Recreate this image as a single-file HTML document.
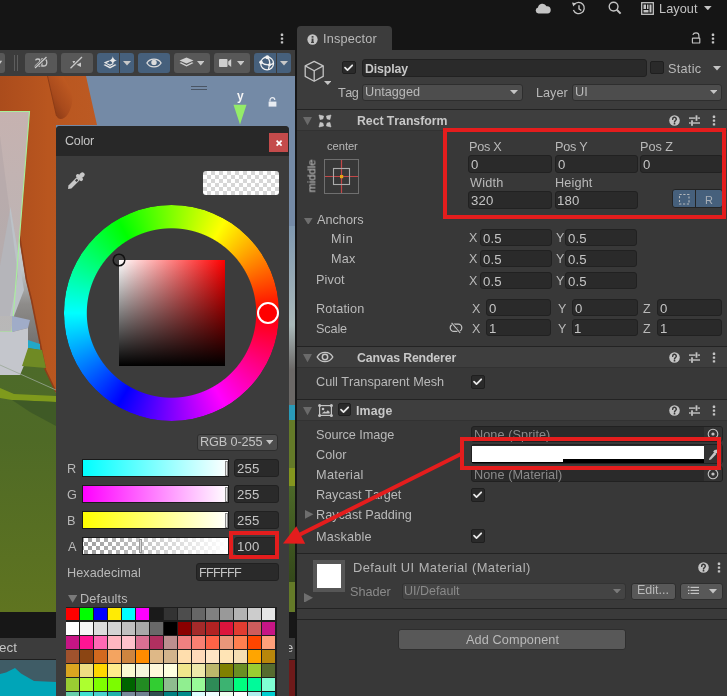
<!DOCTYPE html><html><head><meta charset="utf-8"><style>
html,body{margin:0;padding:0;width:727px;height:696px;overflow:hidden;background:#161616;}
body{position:relative;font-family:"Liberation Sans",sans-serif;-webkit-font-smoothing:antialiased;}
.r{position:absolute;}
.t{position:absolute;line-height:1;white-space:nowrap;will-change:transform;font-kerning:none;}
</style></head><body>
<div class="r" style="left:0px;top:0px;width:727px;height:50px;background:#151515;"></div>
<div class="r" style="left:0px;top:50px;width:295px;height:26px;background:#3c3c3c;"></div>
<div class="r" style="left:297px;top:50px;width:430px;height:646px;background:#383838;"></div>
<div class="r" style="left:297px;top:26px;width:95px;height:24px;background:#3c3c3c;border-radius:4px 4px 0 0;"></div>
<div class="r" style="left:0px;top:76px;width:295px;height:536px;background:#748aa6;"></div>
<div class="r" style="left:0px;top:612px;width:295px;height:26px;background:#171717;"></div>
<div class="r" style="left:0px;top:638px;width:295px;height:21px;background:#3c3c3c;"></div>
<div class="r" style="left:0px;top:659px;width:295px;height:1px;background:#232323;"></div>
<div class="r" style="left:0px;top:660px;width:295px;height:36px;background:#3f5c66;"></div>
<svg class="r" style="left:0px;top:76px;" width="295" height="536" viewBox="0 0 295 536">
<defs>
<linearGradient id="org" gradientUnits="userSpaceOnUse" x1="0" y1="0" x2="97" y2="0"><stop offset="0" stop-color="#ab4c1c"/><stop offset="0.5" stop-color="#b9561f"/><stop offset="1" stop-color="#bc5a23"/></linearGradient>
<linearGradient id="blg" x1="0.1" y1="1" x2="0.9" y2="0.1"><stop offset="0" stop-color="#7e3414"/><stop offset="0.45" stop-color="#a84a1c"/><stop offset="1" stop-color="#c25c22"/></linearGradient>
<linearGradient id="fog" x1="0" y1="0" x2="0" y2="1"><stop offset="0" stop-color="#7f98b0"/><stop offset="0.55" stop-color="#a9b8b9"/><stop offset="0.8" stop-color="#6b6866"/><stop offset="1" stop-color="#6b6866"/></linearGradient><linearGradient id="dg" x1="0" y1="0" x2="0" y2="1"><stop offset="0" stop-color="#4c6828"/><stop offset="1" stop-color="#34481a"/></linearGradient>
<linearGradient id="sky2" gradientUnits="userSpaceOnUse" x1="0" y1="120" x2="0" y2="270"><stop offset="0" stop-color="#c9cfd2"/><stop offset="0.5" stop-color="#c0c6c8"/><stop offset="0.72" stop-color="#8e8c8a"/><stop offset="1" stop-color="#72706e"/></linearGradient>
<linearGradient id="grn" x1="0" y1="0" x2="0" y2="1"><stop offset="0" stop-color="#4c6a2a"/><stop offset="0.35" stop-color="#4f6a26"/><stop offset="1" stop-color="#5f7420"/></linearGradient>
<linearGradient id="pnk" x1="0" y1="0" x2="0" y2="1"><stop offset="0" stop-color="#c6b2b0"/><stop offset="0.6" stop-color="#bdb4b4"/><stop offset="1" stop-color="#b8b8b8"/></linearGradient>
</defs>
<rect x="0" y="0" width="295" height="536" fill="#748aa6"/>
<rect x="285" y="150" width="10" height="180" fill="url(#fog)"/>
<rect x="285" y="329" width="10" height="15" fill="#2a9ab8"/>
<rect x="285" y="344" width="10" height="192" fill="#647a28"/>
<rect x="285" y="392" width="10" height="18" fill="#84961e"/>
<rect x="285" y="410" width="10" height="96" fill="url(#dg)"/>
<polygon points="0,114 19,160 26,204 31,224 45,294 56,317 56,536 0,536" fill="url(#sky2)"/>
<polygon points="0,299 20,299 28,272 42,274 56,317 56,536 0,536" fill="url(#grn)"/>
<polygon points="0,0 86,0 97,49 56,49 56,317 45,294 31,224 26,204 19,160 29.5,35 0,35" fill="url(#org)"/>
<polyline points="19.5,160 26.5,204 31.5,224 45.5,294 56,316" fill="none" stroke="#8a3a18" stroke-width="1.6" opacity="0.85"/>
<path d="M47.5,0 L56.5,40 C58.5,44.5 64,44 68,38 C72,31 73,25 72,19 C70,11 66,5 63,0 Z" fill="url(#blg)"/><line x1="47.5" y1="0" x2="56.5" y2="40" stroke="#8e3c16" stroke-width="1"/>
<polygon points="0,35 29.5,35 12,256 0,256" fill="url(#pnk)"/>
<polygon points="10.5,131 24,214 14,240 0,240 0,190" fill="#bcc2c8"/><polygon points="0,60 18,200 10,240 0,240" fill="#a89ea0" opacity="0.35"/>
<polyline points="0,35.5 29.5,35.5 12,256 0,256" fill="none" stroke="#a8f09a" stroke-width="1.1"/>
<polygon points="12,240 30,244 28,252 12,256" fill="#a0acc8"/>
<polygon points="0,256 12,256 28,252 28,280 20,299 0,299" fill="#c4c6cc"/>
<polygon points="28,264 40,268 40,274 28,272" fill="#22a8c8"/>
<polygon points="28,272 42,274 46,292 22,290" fill="#6f8a24"/>
<line x1="0" y1="289" x2="56" y2="314" stroke="#9aa898" stroke-width="0.8"/>
<polygon points="0,312 14,318 56,320 56,326 12,324 0,322" fill="#7f9a1c"/>
<polygon points="12,324 56,326 56,350 30,336" fill="#3f5a26"/>
</svg>
<div class="r" style="left:190.5px;top:86px;width:16.5px;height:1.0999999999999943px;background:#4a5564;"></div>
<div class="r" style="left:190.5px;top:89.4px;width:16.5px;height:1.0999999999999943px;background:#4a5564;"></div>
<div class="t" style="left:237.21px;top:90.00px;font-size:12px;color:#f4f4f4;font-weight:bold;">y</div>
<svg class="r" style="left:233px;top:103.5px;" width="14" height="21" viewBox="0 0 14 21"><polygon points="0.5,0.8 13.5,0.8 7,20.5" fill="#94ec68"/></svg>
<svg class="r" style="left:268px;top:97px;" width="9" height="10" viewBox="0 0 9 10"><path d="M2,4.5 V3 A2.4,2.4 0 0 1 6.8,3" fill="none" stroke="#e8ecf2" stroke-width="1.2"/><rect x="0.6" y="4.6" width="7.8" height="5" fill="#e8ecf2"/></svg>
<div class="r" style="left:0px;top:612px;width:295px;height:26px;background:#171717;"></div>
<div class="r" style="left:0px;top:638px;width:295px;height:21px;background:#3c3c3c;"></div>
<div class="t" style="left:-1.50px;top:640.80px;font-size:13.4px;color:#c4c4c4;">ect</div>
<div class="r" style="left:289px;top:638px;width:6px;height:21px;overflow:hidden;"><div class="t" style="left:-3px;top:3px;font-size:13px;color:#c4c4c4">e</div></div>
<div class="r" style="left:0px;top:659px;width:295px;height:1px;background:#1f1f1f;"></div>
<svg class="r" style="left:0px;top:660px;" width="56" height="36" viewBox="0 0 56 36"><rect width="56" height="36" fill="#3f5c66"/><polygon points="0,14 6,12.5 15,8 21,13.5 34,21 56,22 56,36 0,36" fill="#00a5b8"/></svg>
<div class="r" style="left:289px;top:660px;width:6px;height:36px;background:#6e1a1a;"></div>
<div class="r" style="left:-4px;top:53px;width:9px;height:20px;background:#585858;border-radius:3px;"></div>
<svg class="r" style="left:0px;top:60px;" width="3" height="5" viewBox="0 0 3 5"><polygon points="-3,0.8 2.2,0.8 -0.4,4.5" fill="#c8c8c8"/></svg>
<div class="r" style="left:14px;top:55px;width:1px;height:16px;background:#5e5e5e;"></div>
<div class="r" style="left:17px;top:55px;width:1px;height:16px;background:#5e5e5e;"></div>
<div class="r" style="left:25px;top:53px;width:32px;height:20px;background:#585858;border-radius:3px;"></div>
<div class="r" style="left:61px;top:53px;width:32px;height:20px;background:#585858;border-radius:3px;"></div>
<div class="r" style="left:97px;top:53px;width:37px;height:20px;background:#46607c;border-radius:3px;"></div>
<div class="r" style="left:119px;top:53px;width:1px;height:20px;background:#3c3c3c;"></div>
<div class="r" style="left:138px;top:53px;width:32px;height:20px;background:#46607c;border-radius:3px;"></div>
<div class="r" style="left:174px;top:53px;width:36px;height:20px;background:#585858;border-radius:3px;"></div>
<div class="r" style="left:214px;top:53px;width:36px;height:20px;background:#585858;border-radius:3px;"></div>
<div class="r" style="left:254px;top:53px;width:37px;height:20px;background:#46607c;border-radius:3px;"></div>
<div class="r" style="left:276px;top:53px;width:1px;height:20px;background:#3c3c3c;"></div>
<svg class="r" style="left:34px;top:55px;" width="16" height="16" viewBox="0 0 16 16"><g fill="none" stroke="#c8c8c8" stroke-width="1.3"><path d="M1.6,5.4 C1.9,3.6 5.9,3.4 5.9,5.7 C5.9,7.4 3.2,8.8 1.4,11 H6.3"/><path d="M7.9,3.9 V11 H9.5 C13.9,11 13.9,3.9 9.5,3.9 Z"/></g><line x1="1" y1="13" x2="12.5" y2="2" stroke="#585858" stroke-width="2.6"/><line x1="1" y1="13" x2="12.5" y2="2" stroke="#c8c8c8" stroke-width="1.3"/></svg>
<svg class="r" style="left:69px;top:55px;" width="16" height="16" viewBox="0 0 16 16"><g fill="#c8c8c8"><polygon points="7.5,9.8 12,7.5 12,12 "/><polygon points="3.5,6 6,6 6,8.5 4.5,8.5"/></g><line x1="1.5" y1="13.3" x2="13" y2="2" stroke="#585858" stroke-width="2.6"/><line x1="1.5" y1="13.3" x2="13" y2="2" stroke="#c8c8c8" stroke-width="1.3"/></svg>
<svg class="r" style="left:103px;top:56px;" width="15" height="13" viewBox="0 0 15 13"><g fill="#e6e6e6"><path d="M9.8,0.3 Q10.3,3.9 13.8,4.5 Q10.3,5.1 9.8,8.7 Q9.3,5.1 5.8,4.5 Q9.3,3.9 9.8,0.3 Z"/><polygon points="0.5,9 2,8.3 7,10.8 12,8.3 13.5,9 7,12.6"/><polygon points="0.8,6.6 5.4,4.6 6.6,5.4 3.4,6.9 7,8.6 9.8,7.2 10.9,7.8 7,9.9"/></g></svg>
<svg class="r" style="left:123px;top:61px;" width="8" height="4.5" viewBox="0 0 8 4.5"><polygon points="0,0 8,0 4.0,4.5" fill="#c8c8c8"/></svg>
<svg class="r" style="left:146px;top:58px;" width="16" height="10" viewBox="0 0 16 10"><path d="M0.9,5 C4,-0.2 12,-0.2 15.1,5 C12,10.2 4,10.2 0.9,5 Z" fill="none" stroke="#dcdcdc" stroke-width="1.3"/><circle cx="8" cy="4.4" r="2.7" fill="#dcdcdc"/></svg>
<svg class="r" style="left:179px;top:57px;" width="15" height="12" viewBox="0 0 15 12"><g fill="#d0d0d0"><polygon points="7.5,0.5 14.5,3.5 7.5,6.5 0.5,3.5"/><polygon points="0.5,6 2,5.3 7.5,8 13,5.3 14.5,6 7.5,9.5"/></g></svg>
<svg class="r" style="left:196.5px;top:61px;" width="7.5" height="4.5" viewBox="0 0 7.5 4.5"><polygon points="0,0 7.5,0 3.75,4.5" fill="#c8c8c8"/></svg>
<svg class="r" style="left:218px;top:58px;" width="14" height="10" viewBox="0 0 14 10"><g fill="#cfcfcf"><rect x="1" y="1" width="8.5" height="8" rx="0.8"/><polygon points="10.2,3.6 13.2,1 13.2,9 10.2,6.4"/></g></svg>
<svg class="r" style="left:236.5px;top:61px;" width="7.5" height="4.5" viewBox="0 0 7.5 4.5"><polygon points="0,0 7.5,0 3.75,4.5" fill="#c8c8c8"/></svg>
<svg class="r" style="left:259px;top:55px;" width="16" height="17" viewBox="0 0 16 17"><g fill="none" stroke="#f0f0f0" stroke-width="1.3"><circle cx="8.1" cy="8.4" r="6.4"/><path d="M8.3,2.2 C10.5,4.5 11,7.5 10.5,9.8 C10,12 9.5,13.5 9.5,14.9"/><path d="M2,7.3 C4.5,9.5 7.5,10 10.5,9.8 C12.5,9.5 14,8.8 14.6,8"/></g><g fill="#f0f0f0"><circle cx="8.3" cy="2.2" r="2"/><circle cx="2" cy="7.3" r="1.8"/><circle cx="10.5" cy="9.8" r="1.5"/></g></svg>
<svg class="r" style="left:280px;top:61px;" width="8" height="4.5" viewBox="0 0 8 4.5"><polygon points="0,0 8,0 4.0,4.5" fill="#c8c8c8"/></svg>
<svg class="r" style="left:280px;top:33px;" width="4" height="11" viewBox="0 0 4 11"><g fill="#c4c4c4"><rect x="0.8" y="0.6" width="2.4" height="2.4" rx="0.6"/><rect x="0.8" y="4.4" width="2.4" height="2.4" rx="0.6"/><rect x="0.8" y="8.2" width="2.4" height="2.4" rx="0.6"/></g></svg>
<svg class="r" style="left:535px;top:2px;" width="16" height="12" viewBox="0 0 16 12"><path d="M3.5,11.5 A3,3 0 0 1 3,5.6 A4.5,4.5 0 0 1 11.5,4.2 A3.6,3.6 0 0 1 12.5,11.5 Z" fill="#c4c4c4"/></svg>
<svg class="r" style="left:571px;top:1px;" width="15" height="14" viewBox="0 0 15 14"><path d="M3.2,3.6 A5.6,5.6 0 1 1 2.4,9" fill="none" stroke="#c4c4c4" stroke-width="1.3"/><polygon points="1,1.5 5.2,2.3 2.3,5.5" fill="#c4c4c4"/><path d="M8,4.3 V7.8 L10.3,9.5" fill="none" stroke="#c4c4c4" stroke-width="1.4"/></svg>
<svg class="r" style="left:608px;top:1px;" width="14" height="14" viewBox="0 0 14 14"><circle cx="5.6" cy="5.6" r="4.4" fill="none" stroke="#c4c4c4" stroke-width="1.4"/><line x1="8.8" y1="8.8" x2="12.6" y2="12.6" stroke="#c4c4c4" stroke-width="2"/></svg>
<svg class="r" style="left:640.5px;top:1.5px;" width="13" height="13" viewBox="0 0 13 13"><rect x="0.7" y="0.7" width="11.6" height="11.6" fill="none" stroke="#c4c4c4" stroke-width="1.3"/><rect x="2.5" y="2.5" width="2.5" height="4.5" fill="#c4c4c4"/><rect x="6" y="2.5" width="1.5" height="4.5" fill="#c4c4c4"/><rect x="2.5" y="8" width="5" height="2.5" fill="#c4c4c4"/><rect x="8.5" y="2.5" width="2" height="8" fill="#c4c4c4"/></svg>
<div class="t" style="left:658.96px;top:2.65px;font-size:12.7px;color:#c4c4c4;letter-spacing:0.081px;">Layout</div>
<svg class="r" style="left:704px;top:6px;" width="7.600000000000023" height="4.300000000000001" viewBox="0 0 7.600000000000023 4.300000000000001"><polygon points="0,0 7.600000000000023,0 3.8000000000000114,4.300000000000001" fill="#c4c4c4"/></svg>
<div class="r" style="left:56px;top:126px;width:233px;height:570px;background:#3c3c3c;border-radius:4px 4px 0 0;"></div>
<div class="r" style="left:56px;top:126px;width:233px;height:30px;background:#282828;border-radius:4px 4px 0 0;"></div>
<svg class="r" style="left:307.4px;top:33.5px;" width="11" height="11" viewBox="0 0 11 11"><circle cx="5.5" cy="5.5" r="5.15" fill="#c4c4c4"/><rect x="4.6" y="4.5" width="1.9" height="4.3" fill="#3c3c3c"/><rect x="4" y="7.9" width="3" height="1" fill="#3c3c3c"/><rect x="4.6" y="2.1" width="1.9" height="1.6" fill="#3c3c3c"/></svg>
<div class="t" style="left:322.63px;top:32.65px;font-size:12.7px;color:#b9b9b9;letter-spacing:0.206px;">Inspector</div>
<svg class="r" style="left:691px;top:32px;" width="10" height="12" viewBox="0 0 10 12"><g fill="none" stroke="#c4c4c4" stroke-width="1.15"><rect x="1.4" y="6.1" width="7.4" height="4.9" rx="0.6"/><path d="M1.8,2.9 C2.3,1.5 3.6,0.9 5,0.9 C6.7,0.9 7.9,2 7.9,3.7 V6"/></g></svg>
<svg class="r" style="left:711px;top:32.5px;" width="4" height="11" viewBox="0 0 4 11"><g fill="#c4c4c4"><rect x="0.8" y="0.6" width="2.4" height="2.4" rx="0.6"/><rect x="0.8" y="4.4" width="2.4" height="2.4" rx="0.6"/><rect x="0.8" y="8.2" width="2.4" height="2.4" rx="0.6"/></g></svg>
<div class="r" style="left:297px;top:50px;width:430px;height:59px;background:#3c3c3c;"></div>
<div class="r" style="left:297px;top:109px;width:430px;height:1px;background:#232323;"></div>
<svg class="r" style="left:304px;top:60px;" width="22" height="23" viewBox="0 0 22 23"><g fill="none" stroke="#c4c4c4" stroke-width="1.3" stroke-linejoin="round"><polygon points="10.2,1.3 19.2,5.9 19.2,16.4 10.2,21.2 1.2,16.4 1.2,5.9"/><polyline points="1.2,5.9 10.2,10.8 19.2,5.9"/><line x1="10.2" y1="10.8" x2="10.2" y2="21.2"/></g></svg>
<svg class="r" style="left:323.5px;top:81px;" width="7.5" height="4" viewBox="0 0 7.5 4"><polygon points="0,0 7.5,0 3.75,4" fill="#c4c4c4"/></svg>
<div class="r" style="left:342.3px;top:61px;width:13.300000000000011px;height:13.299999999999997px;background:#2a2a2a;border:1px solid #1f1f1f;box-sizing:border-box;border-radius:2px;"></div>
<svg class="r" style="left:342.3px;top:61px;" width="13.3" height="13.3" viewBox="0 0 13.3 13.3"><polyline points="3,6.6 5.5,9.1 10.2,4.3" fill="none" stroke="#e8e8e8" stroke-width="1.75" stroke-linecap="round" stroke-linejoin="round"/></svg>
<div class="r" style="left:362px;top:59px;width:285px;height:18px;background:#2a2a2a;border:1px solid #212121;box-sizing:border-box;border-radius:3px;"></div>
<div class="t" style="left:364.58px;top:62.85px;font-size:12.3px;color:#c8c8c8;font-weight:bold;letter-spacing:-0.111px;">Display</div>
<div class="r" style="left:650.3px;top:60.7px;width:13.799999999999955px;height:13.799999999999997px;background:#2a2a2a;border:1px solid #1f1f1f;box-sizing:border-box;border-radius:2px;"></div>
<div class="t" style="left:668.12px;top:62.65px;font-size:12.7px;color:#b9b9b9;letter-spacing:0.270px;">Static</div>
<svg class="r" style="left:713px;top:66px;" width="8" height="4.599999999999994" viewBox="0 0 8 4.599999999999994"><polygon points="0,0 8,0 4.0,4.599999999999994" fill="#c4c4c4"/></svg>
<div class="t" style="left:337.71px;top:86.65px;font-size:12.7px;color:#b9b9b9;letter-spacing:-0.490px;">Tag</div>
<div class="r" style="left:361.8px;top:83.8px;width:161.40000000000003px;height:16.799999999999997px;background:#4d4d4d;border:1px solid #2e2e2e;box-sizing:border-box;border-radius:3px;"></div>
<div class="t" style="left:364.92px;top:85.65px;font-size:12.7px;color:#b9b9b9;">Untagged</div>
<svg class="r" style="left:510px;top:90px;" width="8" height="4.299999999999997" viewBox="0 0 8 4.299999999999997"><polygon points="0,0 8,0 4.0,4.299999999999997" fill="#c4c4c4"/></svg>
<div class="t" style="left:535.66px;top:86.65px;font-size:12.7px;color:#b9b9b9;letter-spacing:-0.004px;">Layer</div>
<div class="r" style="left:571.8px;top:83.6px;width:150.5px;height:17.0px;background:#4d4d4d;border:1px solid #2e2e2e;box-sizing:border-box;border-radius:3px;"></div>
<div class="t" style="left:575.02px;top:85.65px;font-size:12.7px;color:#b9b9b9;">UI</div>
<svg class="r" style="left:709.5px;top:90.2px;" width="7.5" height="4.0" viewBox="0 0 7.5 4.0"><polygon points="0,0 7.5,0 3.75,4.0" fill="#c4c4c4"/></svg>
<div class="r" style="left:297px;top:110px;width:430px;height:20px;background:#3e3e3e;"></div>
<div class="r" style="left:297px;top:130px;width:430px;height:1px;background:#323232;"></div>
<svg class="r" style="left:303px;top:116.7px;" width="9" height="8.299999999999997" viewBox="0 0 9 8.299999999999997"><polygon points="0,0 9,0 4.5,8.299999999999997" fill="#6a6a6a"/></svg>
<svg class="r" style="left:318px;top:113.5px;" width="14" height="14" viewBox="0 0 14 14"><g fill="#c4c4c4" stroke="#c4c4c4" stroke-width="0.6" stroke-linejoin="round"><polygon points="1,1 5.6,2.1 4.9,4.9 2.1,5.6"/><polygon points="13,1 8.4,2.1 9.1,4.9 11.9,5.6"/><polygon points="1,13 2.1,8.4 4.9,9.1 5.6,11.9"/><polygon points="13,13 11.9,8.4 9.1,9.1 8.4,11.9"/></g></svg>
<div class="t" style="left:356.68px;top:114.85px;font-size:12.3px;color:#c8c8c8;font-weight:bold;letter-spacing:-0.040px;">Rect Transform</div>
<svg class="r" style="left:669px;top:114.7px;" width="11" height="11" viewBox="0 0 11 11"><circle cx="5.5" cy="5.5" r="5.3" fill="#c4c4c4"/><path d="M3.7,4.3 A1.8,1.8 0 1 1 6.4,5.6 C5.8,6 5.5,6.3 5.5,7" fill="none" stroke="#383838" stroke-width="1.5" stroke-linecap="round"/><rect x="4.7" y="8" width="1.6" height="1.5" fill="#383838"/></svg>
<svg class="r" style="left:689px;top:114.7px;" width="11" height="11" viewBox="0 0 11 11"><g fill="#c4c4c4"><rect x="0" y="2.4" width="6.5" height="1.4"/><rect x="8.6" y="2.4" width="2.4" height="1.4"/><rect x="6.6" y="0.3" width="1.8" height="5.5"/><rect x="0" y="7.3" width="1.8" height="1.4"/><rect x="4" y="7.3" width="7" height="1.4"/><rect x="2.1" y="5.3" width="1.8" height="5.5"/></g></svg>
<svg class="r" style="left:712px;top:114.7px;" width="4" height="11" viewBox="0 0 4 11"><g fill="#c4c4c4"><rect x="0.8" y="0.6" width="2.4" height="2.4" rx="0.6"/><rect x="0.8" y="4.4" width="2.4" height="2.4" rx="0.6"/><rect x="0.8" y="8.2" width="2.4" height="2.4" rx="0.6"/></g></svg>
<div class="t" style="left:326.62px;top:141.40px;font-size:11.2px;color:#b9b9b9;letter-spacing:-0.053px;">center</div>
<div class="t" style="left:312px;top:176px;font-size:11.2px;color:#c4c4c4;transform:translate(-50%,-50%) rotate(-90deg);">middle</div>
<svg class="r" style="left:324px;top:159px;" width="35" height="35" viewBox="0 0 35 35"><rect x="0.5" y="0.5" width="34" height="34" fill="none" stroke="#6f6f6f" stroke-width="1"/><line x1="1" y1="17.5" x2="34" y2="17.5" stroke="#c24848" stroke-width="1.2"/><line x1="17.5" y1="1" x2="17.5" y2="34" stroke="#c24848" stroke-width="1.2"/><rect x="9.5" y="9.5" width="16" height="16" fill="none" stroke="#ababab" stroke-width="1.1"/><rect x="16" y="16" width="3.2" height="3.2" fill="#e6a415"/></svg>
<div class="t" style="left:468.66px;top:140.65px;font-size:12.7px;color:#b9b9b9;letter-spacing:-0.269px;">Pos X</div>
<div class="t" style="left:555.06px;top:140.65px;font-size:12.7px;color:#b9b9b9;letter-spacing:-0.266px;">Pos Y</div>
<div class="t" style="left:639.96px;top:140.65px;font-size:12.7px;color:#b9b9b9;letter-spacing:-0.058px;">Pos Z</div>
<div class="r" style="left:468px;top:155px;width:83.5px;height:17.5px;background:#2a2a2a;border:1px solid #212121;box-sizing:border-box;border-radius:3px;"></div>
<div class="t" style="left:471.18px;top:157.90px;font-size:13.2px;color:#c4c4c4;letter-spacing:0.15px;">0</div>
<div class="r" style="left:554.5px;top:155px;width:83.0px;height:17.5px;background:#2a2a2a;border:1px solid #212121;box-sizing:border-box;border-radius:3px;"></div>
<div class="t" style="left:557.68px;top:157.90px;font-size:13.2px;color:#c4c4c4;letter-spacing:0.15px;">0</div>
<div class="r" style="left:639.5px;top:155px;width:83.0px;height:17.5px;background:#2a2a2a;border:1px solid #212121;box-sizing:border-box;border-radius:3px;"></div>
<div class="t" style="left:642.68px;top:157.90px;font-size:13.2px;color:#c4c4c4;letter-spacing:0.15px;">0</div>
<div class="t" style="left:469.64px;top:176.65px;font-size:12.7px;color:#b9b9b9;letter-spacing:0.229px;">Width</div>
<div class="t" style="left:555.06px;top:176.65px;font-size:12.7px;color:#b9b9b9;letter-spacing:0.145px;">Height</div>
<div class="r" style="left:468px;top:191px;width:83.5px;height:17.5px;background:#2a2a2a;border:1px solid #212121;box-sizing:border-box;border-radius:3px;"></div>
<div class="t" style="left:471.20px;top:193.90px;font-size:13.2px;color:#c4c4c4;letter-spacing:0.15px;">320</div>
<div class="r" style="left:554.5px;top:191px;width:83.0px;height:17.5px;background:#2a2a2a;border:1px solid #212121;box-sizing:border-box;border-radius:3px;"></div>
<div class="t" style="left:556.89px;top:193.90px;font-size:13.2px;color:#c4c4c4;letter-spacing:0.15px;">180</div>
<div class="r" style="left:671.5px;top:188.8px;width:51.0px;height:19.69999999999999px;background:#46607c;border:1px solid #242424;box-sizing:border-box;border-radius:3px;"></div>
<div class="r" style="left:695px;top:190px;width:1px;height:18px;background:#242424;"></div>
<svg class="r" style="left:678px;top:193px;" width="13" height="13" viewBox="0 0 13 13"><rect x="1.5" y="1.5" width="9.5" height="9.5" fill="none" stroke="#b4b8bc" stroke-width="1.1" stroke-dasharray="2.2,1.6"/></svg>
<div class="t" style="left:705.30px;top:194.50px;font-size:11px;color:#aab0b8;">R</div>
<svg class="r" style="left:304.4px;top:217.6px;" width="8.600000000000023" height="6.800000000000011" viewBox="0 0 8.600000000000023 6.800000000000011"><polygon points="0,0 8.600000000000023,0 4.300000000000011,6.800000000000011" fill="#6e6e6e"/></svg>
<div class="t" style="left:316.68px;top:213.65px;font-size:12.7px;color:#b9b9b9;letter-spacing:-0.001px;">Anchors</div>
<div class="t" style="left:330.86px;top:232.65px;font-size:12.7px;color:#b9b9b9;letter-spacing:0.651px;">Min</div>
<div class="t" style="left:330.86px;top:252.65px;font-size:12.7px;color:#b9b9b9;letter-spacing:0.243px;">Max</div>
<div class="t" style="left:315.66px;top:273.65px;font-size:12.7px;color:#b9b9b9;letter-spacing:0.100px;">Pivot</div>
<div class="t" style="left:468.72px;top:231.75px;font-size:12.5px;color:#b9b9b9;">X</div>
<div class="r" style="left:479.8px;top:229px;width:71.90000000000003px;height:17px;background:#2a2a2a;border:1px solid #212121;box-sizing:border-box;border-radius:3px;"></div>
<div class="t" style="left:482.68px;top:231.90px;font-size:13.2px;color:#c4c4c4;letter-spacing:0.15px;">0.5</div>
<div class="t" style="left:555.73px;top:231.75px;font-size:12.5px;color:#b9b9b9;">Y</div>
<div class="r" style="left:565.3px;top:229px;width:71.30000000000007px;height:17px;background:#2a2a2a;border:1px solid #212121;box-sizing:border-box;border-radius:3px;"></div>
<div class="t" style="left:568.18px;top:231.90px;font-size:13.2px;color:#c4c4c4;letter-spacing:0.15px;">0.5</div>
<div class="t" style="left:468.72px;top:252.75px;font-size:12.5px;color:#b9b9b9;">X</div>
<div class="r" style="left:479.8px;top:249.5px;width:71.90000000000003px;height:17.0px;background:#2a2a2a;border:1px solid #212121;box-sizing:border-box;border-radius:3px;"></div>
<div class="t" style="left:482.68px;top:252.90px;font-size:13.2px;color:#c4c4c4;letter-spacing:0.15px;">0.5</div>
<div class="t" style="left:555.73px;top:252.75px;font-size:12.5px;color:#b9b9b9;">Y</div>
<div class="r" style="left:565.3px;top:249.5px;width:71.30000000000007px;height:17.0px;background:#2a2a2a;border:1px solid #212121;box-sizing:border-box;border-radius:3px;"></div>
<div class="t" style="left:568.18px;top:252.90px;font-size:13.2px;color:#c4c4c4;letter-spacing:0.15px;">0.5</div>
<div class="t" style="left:468.72px;top:274.75px;font-size:12.5px;color:#b9b9b9;">X</div>
<div class="r" style="left:479.8px;top:271.5px;width:71.90000000000003px;height:17.0px;background:#2a2a2a;border:1px solid #212121;box-sizing:border-box;border-radius:3px;"></div>
<div class="t" style="left:482.68px;top:274.90px;font-size:13.2px;color:#c4c4c4;letter-spacing:0.15px;">0.5</div>
<div class="t" style="left:555.73px;top:274.75px;font-size:12.5px;color:#b9b9b9;">Y</div>
<div class="r" style="left:565.3px;top:271.5px;width:71.30000000000007px;height:17.0px;background:#2a2a2a;border:1px solid #212121;box-sizing:border-box;border-radius:3px;"></div>
<div class="t" style="left:568.18px;top:274.90px;font-size:13.2px;color:#c4c4c4;letter-spacing:0.15px;">0.5</div>
<div class="t" style="left:315.86px;top:302.65px;font-size:12.7px;color:#b9b9b9;letter-spacing:0.152px;">Rotation</div>
<div class="t" style="left:316.32px;top:322.65px;font-size:12.7px;color:#b9b9b9;letter-spacing:-0.157px;">Scale</div>
<svg class="r" style="left:449px;top:322px;" width="14" height="12" viewBox="0 0 14 12"><rect x="1.2" y="2.2" width="11.6" height="7.2" rx="3.6" fill="none" stroke="#c4c4c4" stroke-width="1.2"/><line x1="5.5" y1="5.8" x2="8.5" y2="5.8" stroke="#c4c4c4" stroke-width="0.9"/><line x1="2.6" y1="0.8" x2="11.2" y2="11" stroke="#383838" stroke-width="2.4"/><line x1="2.6" y1="0.8" x2="11.2" y2="11" stroke="#c4c4c4" stroke-width="1.1"/></svg>
<div class="t" style="left:472.12px;top:302.75px;font-size:12.5px;color:#b9b9b9;">X</div>
<div class="r" style="left:486.4px;top:299.3px;width:65.0px;height:17.0px;background:#2a2a2a;border:1px solid #212121;box-sizing:border-box;border-radius:3px;"></div>
<div class="t" style="left:489.28px;top:301.90px;font-size:13.2px;color:#c4c4c4;letter-spacing:0.15px;">0</div>
<div class="t" style="left:557.73px;top:302.75px;font-size:12.5px;color:#b9b9b9;">Y</div>
<div class="r" style="left:572px;top:299.3px;width:65.5px;height:17.0px;background:#2a2a2a;border:1px solid #212121;box-sizing:border-box;border-radius:3px;"></div>
<div class="t" style="left:574.88px;top:301.90px;font-size:13.2px;color:#c4c4c4;letter-spacing:0.15px;">0</div>
<div class="t" style="left:643.10px;top:302.75px;font-size:12.5px;color:#b9b9b9;">Z</div>
<div class="r" style="left:657.3px;top:299.3px;width:65.20000000000005px;height:17.0px;background:#2a2a2a;border:1px solid #212121;box-sizing:border-box;border-radius:3px;"></div>
<div class="t" style="left:660.18px;top:301.90px;font-size:13.2px;color:#c4c4c4;letter-spacing:0.15px;">0</div>
<div class="t" style="left:472.12px;top:322.75px;font-size:12.5px;color:#b9b9b9;">X</div>
<div class="r" style="left:486.4px;top:319.3px;width:65.0px;height:17.0px;background:#2a2a2a;border:1px solid #212121;box-sizing:border-box;border-radius:3px;"></div>
<div class="t" style="left:488.79px;top:321.90px;font-size:13.2px;color:#c4c4c4;letter-spacing:0.15px;">1</div>
<div class="t" style="left:557.73px;top:322.75px;font-size:12.5px;color:#b9b9b9;">Y</div>
<div class="r" style="left:572px;top:319.3px;width:65.5px;height:17.0px;background:#2a2a2a;border:1px solid #212121;box-sizing:border-box;border-radius:3px;"></div>
<div class="t" style="left:574.39px;top:321.90px;font-size:13.2px;color:#c4c4c4;letter-spacing:0.15px;">1</div>
<div class="t" style="left:643.10px;top:322.75px;font-size:12.5px;color:#b9b9b9;">Z</div>
<div class="r" style="left:657.3px;top:319.3px;width:65.20000000000005px;height:17.0px;background:#2a2a2a;border:1px solid #212121;box-sizing:border-box;border-radius:3px;"></div>
<div class="t" style="left:659.69px;top:321.90px;font-size:13.2px;color:#c4c4c4;letter-spacing:0.15px;">1</div>
<div class="r" style="left:297px;top:346px;width:430px;height:1px;background:#232323;"></div>
<div class="r" style="left:297px;top:347px;width:430px;height:20px;background:#3e3e3e;"></div>
<div class="r" style="left:297px;top:367px;width:430px;height:1px;background:#323232;"></div>
<svg class="r" style="left:303px;top:353.7px;" width="9" height="8.300000000000011" viewBox="0 0 9 8.300000000000011"><polygon points="0,0 9,0 4.5,8.300000000000011" fill="#6a6a6a"/></svg>
<svg class="r" style="left:316px;top:350px;" width="18" height="14" viewBox="0 0 18 14"><path d="M1.2,7 C4.5,0.8 13.5,0.8 16.8,7 C13.5,13.2 4.5,13.2 1.2,7 Z" fill="none" stroke="#c4c4c4" stroke-width="1.4"/><circle cx="9" cy="7" r="2.7" fill="none" stroke="#c4c4c4" stroke-width="1.5"/></svg>
<div class="t" style="left:357.30px;top:351.85px;font-size:12.3px;color:#c8c8c8;font-weight:bold;letter-spacing:-0.142px;">Canvas Renderer</div>
<svg class="r" style="left:669px;top:351.7px;" width="11" height="11" viewBox="0 0 11 11"><circle cx="5.5" cy="5.5" r="5.3" fill="#c4c4c4"/><path d="M3.7,4.3 A1.8,1.8 0 1 1 6.4,5.6 C5.8,6 5.5,6.3 5.5,7" fill="none" stroke="#383838" stroke-width="1.5" stroke-linecap="round"/><rect x="4.7" y="8" width="1.6" height="1.5" fill="#383838"/></svg>
<svg class="r" style="left:689px;top:351.7px;" width="11" height="11" viewBox="0 0 11 11"><g fill="#c4c4c4"><rect x="0" y="2.4" width="6.5" height="1.4"/><rect x="8.6" y="2.4" width="2.4" height="1.4"/><rect x="6.6" y="0.3" width="1.8" height="5.5"/><rect x="0" y="7.3" width="1.8" height="1.4"/><rect x="4" y="7.3" width="7" height="1.4"/><rect x="2.1" y="5.3" width="1.8" height="5.5"/></g></svg>
<svg class="r" style="left:712px;top:351.7px;" width="4" height="11" viewBox="0 0 4 11"><g fill="#c4c4c4"><rect x="0.8" y="0.6" width="2.4" height="2.4" rx="0.6"/><rect x="0.8" y="4.4" width="2.4" height="2.4" rx="0.6"/><rect x="0.8" y="8.2" width="2.4" height="2.4" rx="0.6"/></g></svg>
<div class="t" style="left:315.96px;top:375.65px;font-size:12.7px;color:#b9b9b9;letter-spacing:-0.010px;">Cull Transparent Mesh</div>
<div class="r" style="left:471px;top:374.5px;width:14px;height:14.0px;background:#2a2a2a;border:1px solid #1f1f1f;box-sizing:border-box;border-radius:2px;"></div>
<svg class="r" style="left:471px;top:374.5px;" width="14" height="14" viewBox="0 0 14 14"><polyline points="3,6.6 5.5,9.1 10.2,4.3" fill="none" stroke="#e8e8e8" stroke-width="1.75" stroke-linecap="round" stroke-linejoin="round"/></svg>
<div class="r" style="left:297px;top:399px;width:430px;height:1px;background:#232323;"></div>
<div class="r" style="left:297px;top:400px;width:430px;height:19.600000000000023px;background:#3e3e3e;"></div>
<div class="r" style="left:297px;top:419.6px;width:430px;height:1.0px;background:#323232;"></div>
<svg class="r" style="left:303px;top:406.5px;" width="9" height="8.300000000000011" viewBox="0 0 9 8.300000000000011"><polygon points="0,0 9,0 4.5,8.300000000000011" fill="#6a6a6a"/></svg>
<svg class="r" style="left:317.5px;top:403.5px;" width="15" height="13" viewBox="0 0 15 13"><rect x="1.6" y="1.6" width="11.8" height="9.8" fill="none" stroke="#c4c4c4" stroke-width="1.2"/><g fill="#c4c4c4"><circle cx="1.6" cy="1.6" r="1.5"/><circle cx="13.4" cy="1.6" r="1.5"/><circle cx="1.6" cy="11.4" r="1.5"/><circle cx="13.4" cy="11.4" r="1.5"/><circle cx="5" cy="5" r="1.3"/><path d="M3.6,9.6 L6.5,7.2 L8,8.2 L9.8,6.2 L11.6,8 L11.6,9.6 Z"/></g></svg>
<div class="r" style="left:337.6px;top:403.3px;width:13.0px;height:13.0px;background:#2a2a2a;border:1px solid #1f1f1f;box-sizing:border-box;border-radius:2px;"></div>
<svg class="r" style="left:337.6px;top:403.3px;" width="13" height="13" viewBox="0 0 13 13"><polyline points="3,6.6 5.5,9.1 10.2,4.3" fill="none" stroke="#e8e8e8" stroke-width="1.75" stroke-linecap="round" stroke-linejoin="round"/></svg>
<div class="t" style="left:356.48px;top:404.85px;font-size:12.3px;color:#c8c8c8;font-weight:bold;letter-spacing:0.199px;">Image</div>
<svg class="r" style="left:669px;top:404.5px;" width="11" height="11" viewBox="0 0 11 11"><circle cx="5.5" cy="5.5" r="5.3" fill="#c4c4c4"/><path d="M3.7,4.3 A1.8,1.8 0 1 1 6.4,5.6 C5.8,6 5.5,6.3 5.5,7" fill="none" stroke="#383838" stroke-width="1.5" stroke-linecap="round"/><rect x="4.7" y="8" width="1.6" height="1.5" fill="#383838"/></svg>
<svg class="r" style="left:689px;top:404.5px;" width="11" height="11" viewBox="0 0 11 11"><g fill="#c4c4c4"><rect x="0" y="2.4" width="6.5" height="1.4"/><rect x="8.6" y="2.4" width="2.4" height="1.4"/><rect x="6.6" y="0.3" width="1.8" height="5.5"/><rect x="0" y="7.3" width="1.8" height="1.4"/><rect x="4" y="7.3" width="7" height="1.4"/><rect x="2.1" y="5.3" width="1.8" height="5.5"/></g></svg>
<svg class="r" style="left:712px;top:404.5px;" width="4" height="11" viewBox="0 0 4 11"><g fill="#c4c4c4"><rect x="0.8" y="0.6" width="2.4" height="2.4" rx="0.6"/><rect x="0.8" y="4.4" width="2.4" height="2.4" rx="0.6"/><rect x="0.8" y="8.2" width="2.4" height="2.4" rx="0.6"/></g></svg>
<div class="t" style="left:316.02px;top:428.65px;font-size:12.7px;color:#b9b9b9;letter-spacing:-0.057px;">Source Image</div>
<div class="t" style="left:315.96px;top:448.65px;font-size:12.7px;color:#b9b9b9;letter-spacing:0.052px;">Color</div>
<div class="t" style="left:315.56px;top:468.65px;font-size:12.7px;color:#b9b9b9;letter-spacing:0.317px;">Material</div>
<div class="t" style="left:315.56px;top:488.65px;font-size:12.7px;color:#b9b9b9;letter-spacing:-0.052px;">Raycast Target</div>
<svg class="r" style="left:305px;top:510.3px;" width="8.5" height="8.699999999999989" viewBox="0 0 8.5 8.699999999999989"><polygon points="0,0 8.5,4.349999999999994 0,8.699999999999989" fill="#6e6e6e"/></svg>
<div class="t" style="left:315.56px;top:508.65px;font-size:12.7px;color:#b9b9b9;letter-spacing:-0.011px;">Raycast Padding</div>
<div class="t" style="left:315.56px;top:530.65px;font-size:12.7px;color:#b9b9b9;letter-spacing:0.179px;">Maskable</div>
<div class="r" style="left:471px;top:425.5px;width:251.5px;height:16.5px;background:#2a2a2a;border:1px solid #212121;box-sizing:border-box;border-radius:3px;"></div>
<div class="r" style="left:704px;top:426.5px;width:17.5px;height:14.5px;background:#333333;border-radius:0 2px 2px 0;"></div>
<div class="t" style="left:473.86px;top:428.65px;font-size:12.7px;color:#8a8a8a;letter-spacing:0.075px;">None (Sprite)</div>
<svg class="r" style="left:707px;top:427.75px;" width="12" height="12" viewBox="0 0 12 12"><circle cx="6" cy="6" r="4.8" fill="none" stroke="#c4c4c4" stroke-width="1.1"/><circle cx="6" cy="6" r="1.6" fill="#c4c4c4"/></svg>
<div class="r" style="left:471px;top:444px;width:251.5px;height:20px;background:#2a2a2a;border:1px solid #212121;box-sizing:border-box;border-radius:3px;"></div>
<div class="r" style="left:471.5px;top:445.5px;width:232.5px;height:17.0px;background:#000;"></div>
<div class="r" style="left:472px;top:446px;width:232px;height:13px;background:#ffffff;"></div>
<div class="r" style="left:472px;top:459px;width:91.29999999999995px;height:3px;background:#ffffff;"></div>
<div class="r" style="left:704px;top:445px;width:17.5px;height:18px;background:#333333;"></div>
<svg class="r" style="left:708px;top:448.5px;" width="10" height="12" viewBox="0 0 10 12"><g fill="#c4c4c4"><path d="M6.2,3.2 L8.2,5.2 L3,10.4 L1.2,11 L0.9,10.7 L1.5,8.9 Z"/><path d="M6.6,0.9 L9.5,0.5 L9.3,3.6 L7.7,5.1 L5.1,2.4 Z"/></g></svg>
<div class="r" style="left:471px;top:466px;width:251.5px;height:16px;background:#2a2a2a;border:1px solid #212121;box-sizing:border-box;border-radius:3px;"></div>
<div class="r" style="left:704px;top:467px;width:17.5px;height:14px;background:#333333;border-radius:0 2px 2px 0;"></div>
<div class="t" style="left:473.86px;top:468.65px;font-size:12.7px;color:#8a8a8a;letter-spacing:0.058px;">None (Material)</div>
<svg class="r" style="left:707px;top:468.0px;" width="12" height="12" viewBox="0 0 12 12"><circle cx="6" cy="6" r="4.8" fill="none" stroke="#c4c4c4" stroke-width="1.1"/><circle cx="6" cy="6" r="1.6" fill="#c4c4c4"/></svg>
<div class="r" style="left:471px;top:487.5px;width:14px;height:14.0px;background:#2a2a2a;border:1px solid #1f1f1f;box-sizing:border-box;border-radius:2px;"></div>
<svg class="r" style="left:471px;top:487.5px;" width="14" height="14" viewBox="0 0 14 14"><polyline points="3,6.6 5.5,9.1 10.2,4.3" fill="none" stroke="#e8e8e8" stroke-width="1.75" stroke-linecap="round" stroke-linejoin="round"/></svg>
<div class="r" style="left:471px;top:528.5px;width:14px;height:14.0px;background:#2a2a2a;border:1px solid #1f1f1f;box-sizing:border-box;border-radius:2px;"></div>
<svg class="r" style="left:471px;top:528.5px;" width="14" height="14" viewBox="0 0 14 14"><polyline points="3,6.6 5.5,9.1 10.2,4.3" fill="none" stroke="#e8e8e8" stroke-width="1.75" stroke-linecap="round" stroke-linejoin="round"/></svg>
<div class="r" style="left:297px;top:553px;width:430px;height:1px;background:#232323;"></div>
<div class="r" style="left:297px;top:554px;width:430px;height:54px;background:#3a3a3a;"></div>
<div class="r" style="left:313px;top:560px;width:31.5px;height:32px;background:#565656;"></div>
<div class="r" style="left:316.6px;top:563.6px;width:24.599999999999966px;height:24.399999999999977px;background:#ffffff;"></div>
<div class="t" style="left:352.64px;top:562.05px;font-size:12.9px;color:#b4b4b4;letter-spacing:0.430px;">Default UI Material (Material)</div>
<svg class="r" style="left:698px;top:561.5px;" width="11" height="11" viewBox="0 0 11 11"><circle cx="5.5" cy="5.5" r="5.3" fill="#c4c4c4"/><path d="M3.7,4.3 A1.8,1.8 0 1 1 6.4,5.6 C5.8,6 5.5,6.3 5.5,7" fill="none" stroke="#383838" stroke-width="1.5" stroke-linecap="round"/><rect x="4.7" y="8" width="1.6" height="1.5" fill="#383838"/></svg>
<svg class="r" style="left:716.8px;top:561.5px;" width="4" height="11" viewBox="0 0 4 11"><g fill="#c4c4c4"><rect x="0.8" y="0.6" width="2.4" height="2.4" rx="0.6"/><rect x="0.8" y="4.4" width="2.4" height="2.4" rx="0.6"/><rect x="0.8" y="8.2" width="2.4" height="2.4" rx="0.6"/></g></svg>
<svg class="r" style="left:303.5px;top:592.8px;" width="9.0" height="9.700000000000045" viewBox="0 0 9.0 9.700000000000045"><polygon points="0,0 9.0,4.850000000000023 0,9.700000000000045" fill="#6e6e6e"/></svg>
<div class="t" style="left:349.82px;top:585.65px;font-size:12.7px;color:#8a8a8a;letter-spacing:-0.033px;">Shader</div>
<div class="r" style="left:402px;top:582.5px;width:224px;height:17.0px;background:#444444;border:1px solid #333333;box-sizing:border-box;border-radius:3px;"></div>
<div class="t" style="left:404.44px;top:584.75px;font-size:12.5px;color:#8a8a8a;">UI/Default</div>
<svg class="r" style="left:613px;top:588.5px;" width="8" height="4.5" viewBox="0 0 8 4.5"><polygon points="0,0 8,0 4.0,4.5" fill="#7a7a7a"/></svg>
<div class="r" style="left:630.5px;top:582.5px;width:45.0px;height:17.0px;background:#585858;border:1px solid #2e2e2e;box-sizing:border-box;border-radius:3px;"></div>
<div class="t" style="left:636.77px;top:583.75px;font-size:12.5px;color:#b9b9b9;">Edit...</div>
<div class="r" style="left:679.5px;top:582.5px;width:43.0px;height:17.0px;background:#585858;border:1px solid #2e2e2e;box-sizing:border-box;border-radius:3px;"></div>
<svg class="r" style="left:686px;top:585px;" width="14" height="11" viewBox="0 0 14 11"><g fill="#c4c4c4"><rect x="4.5" y="1.8" width="8.5" height="1.2"/><rect x="4.5" y="4.8" width="8.5" height="1.2"/><rect x="4.5" y="7.8" width="8.5" height="1.2"/><rect x="2" y="4.8" width="1.4" height="1.2"/><rect x="2" y="7.8" width="1.4" height="1.2"/><polygon points="1.4,2.6 2.7,0.9 4,2.6"/></g></svg>
<svg class="r" style="left:709px;top:589px;" width="8" height="4.5" viewBox="0 0 8 4.5"><polygon points="0,0 8,0 4.0,4.5" fill="#c4c4c4"/></svg>
<div class="r" style="left:297px;top:608px;width:430px;height:1px;background:#232323;"></div>
<div class="r" style="left:297px;top:609px;width:430px;height:9.5px;background:#3a3a3a;"></div>
<div class="r" style="left:297px;top:618.5px;width:430px;height:1.0px;background:#232323;"></div>
<div class="r" style="left:398px;top:628.8px;width:227.70000000000005px;height:21.700000000000045px;background:#585858;border:1px solid #2e2e2e;box-sizing:border-box;border-radius:3px;"></div>
<div class="t" style="left:465.88px;top:633.65px;font-size:12.7px;color:#b9b9b9;letter-spacing:0.111px;">Add Component</div>
<div class="t" style="left:64.77px;top:134.75px;font-size:12.5px;color:#c4c4c4;letter-spacing:-0.157px;">Color</div>
<div class="r" style="left:269px;top:133px;width:19px;height:19px;background:#c44b4b;"></div>
<svg class="r" style="left:273.5px;top:137.5px;" width="10" height="10" viewBox="0 0 10 10"><g stroke="#ffffff" stroke-width="1.7" stroke-linecap="butt"><line x1="2.6" y1="2.6" x2="7.6" y2="7.6"/><line x1="7.6" y1="2.6" x2="2.6" y2="7.6"/></g></svg>
<svg class="r" style="left:66px;top:171px;" width="20" height="20" viewBox="0 0 20 20"><g transform="translate(10,10) rotate(45)" fill="#c8c8c8"><rect x="-2.3" y="-11.3" width="4.6" height="6" rx="2.2"/><rect x="-4.1" y="-6.6" width="8.2" height="3.4" rx="1.3"/><path d="M-2.1,-3.4 H2.1 V8.6 L0,11.2 L-2.1,8.6 Z"/><rect x="-1" y="-2.2" width="2" height="2.6" fill="#3c3c3c"/></g></svg>
<div class="r" style="left:203px;top:171px;width:76px;height:24px;border-radius:3px;background-color:#ffffff;background-image:linear-gradient(45deg,#d6d6d6 25%,transparent 25%,transparent 75%,#d6d6d6 75%),linear-gradient(45deg,#d6d6d6 25%,transparent 25%,transparent 75%,#d6d6d6 75%);background-size:8px 8px;background-position:4px 0,0 4px;"></div>
<div class="r" style="left:63.7px;top:205px;width:215.6px;height:215.6px;border-radius:50%;background:conic-gradient(from 90deg,#f00,#f0f,#00f,#0ff,#0f0,#ff0,#f00);-webkit-mask:radial-gradient(circle,transparent 84.2px,#000 85.2px);mask:radial-gradient(circle,transparent 84.2px,#000 85.2px);"></div>
<div class="r" style="left:119px;top:260px;width:106px;height:106px;background:linear-gradient(to top,#000,rgba(0,0,0,0)),linear-gradient(to right,#fff,#f00);"></div>
<svg class="r" style="left:111px;top:252px;" width="16" height="16" viewBox="0 0 16 16"><circle cx="8" cy="8" r="5.8" fill="none" stroke="#111" stroke-width="1.5"/></svg>
<svg class="r" style="left:255px;top:300px;" width="26" height="26" viewBox="0 0 26 26"><circle cx="13" cy="13" r="10" fill="#ff0000" stroke="#ffffff" stroke-width="2"/></svg>
<div class="r" style="left:196.7px;top:434px;width:81.60000000000002px;height:16.5px;background:#4d4d4d;border:1px solid #2e2e2e;box-sizing:border-box;border-radius:3px;"></div>
<div class="t" style="left:200.06px;top:435.65px;font-size:12.7px;color:#c4c4c4;letter-spacing:-0.119px;">RGB 0-255</div>
<svg class="r" style="left:265.7px;top:440px;" width="7.300000000000011" height="4.5" viewBox="0 0 7.300000000000011 4.5"><polygon points="0,0 7.300000000000011,0 3.6500000000000057,4.5" fill="#c4c4c4"/></svg>
<div class="t" style="left:67.06px;top:462.65px;font-size:12.7px;color:#b8b8b8;">R</div>
<div class="r" style="left:82px;top:459px;width:147px;height:17.5px;box-sizing:border-box;border:1px solid #1a1a1a;background:linear-gradient(to right,#00ffff,#ffffff);"></div>
<div class="r" style="left:224.5px;top:460.5px;width:3.5px;height:15.0px;background:#e8e8e8;border:1px solid #8a8a8a;box-sizing:border-box;"></div>
<div class="r" style="left:234.3px;top:459px;width:44.30000000000001px;height:17.5px;background:#2a2a2a;border:1px solid #212121;box-sizing:border-box;border-radius:3px;"></div>
<div class="t" style="left:236.94px;top:461.90px;font-size:13.2px;color:#c4c4c4;letter-spacing:0.15px;">255</div>
<div class="t" style="left:67.46px;top:488.65px;font-size:12.7px;color:#b8b8b8;">G</div>
<div class="r" style="left:82px;top:485px;width:147px;height:17.5px;box-sizing:border-box;border:1px solid #1a1a1a;background:linear-gradient(to right,#ff00ff,#ffffff);"></div>
<div class="r" style="left:224.5px;top:486.5px;width:3.5px;height:15.0px;background:#e8e8e8;border:1px solid #8a8a8a;box-sizing:border-box;"></div>
<div class="r" style="left:234.3px;top:485px;width:44.30000000000001px;height:17.5px;background:#2a2a2a;border:1px solid #212121;box-sizing:border-box;border-radius:3px;"></div>
<div class="t" style="left:236.94px;top:487.90px;font-size:13.2px;color:#c4c4c4;letter-spacing:0.15px;">255</div>
<div class="t" style="left:67.06px;top:514.65px;font-size:12.7px;color:#b8b8b8;">B</div>
<div class="r" style="left:82px;top:511px;width:147px;height:17.5px;box-sizing:border-box;border:1px solid #1a1a1a;background:linear-gradient(to right,#ffff00,#ffffff);"></div>
<div class="r" style="left:224.5px;top:512.5px;width:3.5px;height:15.0px;background:#e8e8e8;border:1px solid #8a8a8a;box-sizing:border-box;"></div>
<div class="r" style="left:234.3px;top:511px;width:44.30000000000001px;height:17.5px;background:#2a2a2a;border:1px solid #212121;box-sizing:border-box;border-radius:3px;"></div>
<div class="t" style="left:236.94px;top:513.90px;font-size:13.2px;color:#c4c4c4;letter-spacing:0.15px;">255</div>
<div class="t" style="left:67.88px;top:540.65px;font-size:12.7px;color:#b8b8b8;">A</div>
<div class="r" style="left:82px;top:537px;width:147px;height:17.5px;box-sizing:border-box;border:1px solid #1a1a1a;background-color:#fff;background-image:linear-gradient(to right,rgba(255,255,255,0),#fff),linear-gradient(45deg,#9c9c9c 25%,transparent 25%,transparent 75%,#9c9c9c 75%),linear-gradient(45deg,#9c9c9c 25%,transparent 25%,transparent 75%,#9c9c9c 75%);background-size:100% 100%,8px 8px,8px 8px;background-position:0 0,1px 0,5px 4px;"></div>
<div class="r" style="left:138.5px;top:539px;width:3.0px;height:14px;background:#d8d8d8;border:1px solid #9a9a9a;box-sizing:border-box;"></div>
<div class="r" style="left:234.3px;top:537px;width:44.30000000000001px;height:17.5px;background:#2a2a2a;border:1px solid #212121;box-sizing:border-box;border-radius:3px;"></div>
<div class="t" style="left:236.59px;top:539.90px;font-size:13.2px;color:#c4c4c4;letter-spacing:0.15px;">100</div>
<div class="t" style="left:67.06px;top:566.65px;font-size:12.7px;color:#b8b8b8;letter-spacing:0.038px;">Hexadecimal</div>
<div class="r" style="left:196.3px;top:563px;width:82.30000000000001px;height:17.5px;background:#2a2a2a;border:1px solid #212121;box-sizing:border-box;border-radius:3px;"></div>
<div class="t" style="left:198.86px;top:566.65px;font-size:12.7px;color:#c4c4c4;letter-spacing:-0.759px;">FFFFFF</div>
<svg class="r" style="left:67.7px;top:594.8px;" width="9.299999999999997" height="7.800000000000068" viewBox="0 0 9.299999999999997 7.800000000000068"><polygon points="0,0 9.299999999999997,0 4.649999999999999,7.800000000000068" fill="#7a7a7a"/></svg>
<div class="t" style="left:79.96px;top:592.65px;font-size:12.7px;color:#b8b8b8;letter-spacing:0.144px;">Defaults</div>
<div class="r" style="left:65.5px;top:606.7px;width:211.10000000000002px;height:89.29999999999995px;background:#1e1e1e;"></div>
<div class="r" style="left:66.4px;top:607.6px;width:12.899999999999991px;height:12.899999999999977px;background:#ff0000;"></div>
<div class="r" style="left:80.37px;top:607.6px;width:12.899999999999991px;height:12.899999999999977px;background:#00ff00;"></div>
<div class="r" style="left:94.34px;top:607.6px;width:12.899999999999991px;height:12.899999999999977px;background:#0000ff;"></div>
<div class="r" style="left:108.31px;top:607.6px;width:12.899999999999991px;height:12.899999999999977px;background:#ffeb04;"></div>
<div class="r" style="left:122.28px;top:607.6px;width:12.900000000000006px;height:12.899999999999977px;background:#00ffff;"></div>
<div class="r" style="left:136.25px;top:607.6px;width:12.900000000000006px;height:12.899999999999977px;background:#ff00ff;"></div>
<div class="r" style="left:150.22px;top:607.6px;width:12.900000000000006px;height:12.899999999999977px;background:#1a1a1a;"></div>
<div class="r" style="left:164.19px;top:607.6px;width:12.900000000000006px;height:12.899999999999977px;background:#333333;"></div>
<div class="r" style="left:178.16px;top:607.6px;width:12.900000000000006px;height:12.899999999999977px;background:#4d4d4d;"></div>
<div class="r" style="left:192.13px;top:607.6px;width:12.900000000000006px;height:12.899999999999977px;background:#666666;"></div>
<div class="r" style="left:206.1px;top:607.6px;width:12.900000000000006px;height:12.899999999999977px;background:#808080;"></div>
<div class="r" style="left:220.07px;top:607.6px;width:12.900000000000006px;height:12.899999999999977px;background:#999999;"></div>
<div class="r" style="left:234.04px;top:607.6px;width:12.900000000000006px;height:12.899999999999977px;background:#b3b3b3;"></div>
<div class="r" style="left:248.01px;top:607.6px;width:12.900000000000034px;height:12.899999999999977px;background:#cccccc;"></div>
<div class="r" style="left:261.98px;top:607.6px;width:12.899999999999977px;height:12.899999999999977px;background:#e6e6e6;"></div>
<div class="r" style="left:66.4px;top:621.65px;width:12.899999999999991px;height:12.899999999999977px;background:#ffffff;"></div>
<div class="r" style="left:80.37px;top:621.65px;width:12.899999999999991px;height:12.899999999999977px;background:#f5f5f5;"></div>
<div class="r" style="left:94.34px;top:621.65px;width:12.899999999999991px;height:12.899999999999977px;background:#dcdcdc;"></div>
<div class="r" style="left:108.31px;top:621.65px;width:12.899999999999991px;height:12.899999999999977px;background:#d3d3d3;"></div>
<div class="r" style="left:122.28px;top:621.65px;width:12.900000000000006px;height:12.899999999999977px;background:#c0c0c0;"></div>
<div class="r" style="left:136.25px;top:621.65px;width:12.900000000000006px;height:12.899999999999977px;background:#a9a9a9;"></div>
<div class="r" style="left:150.22px;top:621.65px;width:12.900000000000006px;height:12.899999999999977px;background:#696969;"></div>
<div class="r" style="left:164.19px;top:621.65px;width:12.900000000000006px;height:12.899999999999977px;background:#000000;"></div>
<div class="r" style="left:178.16px;top:621.65px;width:12.900000000000006px;height:12.899999999999977px;background:#8b0000;"></div>
<div class="r" style="left:192.13px;top:621.65px;width:12.900000000000006px;height:12.899999999999977px;background:#a52a2a;"></div>
<div class="r" style="left:206.1px;top:621.65px;width:12.900000000000006px;height:12.899999999999977px;background:#b22222;"></div>
<div class="r" style="left:220.07px;top:621.65px;width:12.900000000000006px;height:12.899999999999977px;background:#dc143c;"></div>
<div class="r" style="left:234.04px;top:621.65px;width:12.900000000000006px;height:12.899999999999977px;background:#e03c31;"></div>
<div class="r" style="left:248.01px;top:621.65px;width:12.900000000000034px;height:12.899999999999977px;background:#cd5c5c;"></div>
<div class="r" style="left:261.98px;top:621.65px;width:12.899999999999977px;height:12.899999999999977px;background:#c71585;"></div>
<div class="r" style="left:66.4px;top:635.7px;width:12.899999999999991px;height:12.899999999999977px;background:#c71585;"></div>
<div class="r" style="left:80.37px;top:635.7px;width:12.899999999999991px;height:12.899999999999977px;background:#ff1493;"></div>
<div class="r" style="left:94.34px;top:635.7px;width:12.899999999999991px;height:12.899999999999977px;background:#ff69b4;"></div>
<div class="r" style="left:108.31px;top:635.7px;width:12.899999999999991px;height:12.899999999999977px;background:#ffb6c1;"></div>
<div class="r" style="left:122.28px;top:635.7px;width:12.900000000000006px;height:12.899999999999977px;background:#ffc0cb;"></div>
<div class="r" style="left:136.25px;top:635.7px;width:12.900000000000006px;height:12.899999999999977px;background:#db7093;"></div>
<div class="r" style="left:150.22px;top:635.7px;width:12.900000000000006px;height:12.899999999999977px;background:#b03060;"></div>
<div class="r" style="left:164.19px;top:635.7px;width:12.900000000000006px;height:12.899999999999977px;background:#bc8f8f;"></div>
<div class="r" style="left:178.16px;top:635.7px;width:12.900000000000006px;height:12.899999999999977px;background:#f08080;"></div>
<div class="r" style="left:192.13px;top:635.7px;width:12.900000000000006px;height:12.899999999999977px;background:#fa8072;"></div>
<div class="r" style="left:206.1px;top:635.7px;width:12.900000000000006px;height:12.899999999999977px;background:#ff6347;"></div>
<div class="r" style="left:220.07px;top:635.7px;width:12.900000000000006px;height:12.899999999999977px;background:#e9967a;"></div>
<div class="r" style="left:234.04px;top:635.7px;width:12.900000000000006px;height:12.899999999999977px;background:#ff7f50;"></div>
<div class="r" style="left:248.01px;top:635.7px;width:12.900000000000034px;height:12.899999999999977px;background:#ff4500;"></div>
<div class="r" style="left:261.98px;top:635.7px;width:12.899999999999977px;height:12.899999999999977px;background:#ffa07a;"></div>
<div class="r" style="left:66.4px;top:649.75px;width:12.899999999999991px;height:12.899999999999977px;background:#a0522d;"></div>
<div class="r" style="left:80.37px;top:649.75px;width:12.899999999999991px;height:12.899999999999977px;background:#8b4513;"></div>
<div class="r" style="left:94.34px;top:649.75px;width:12.899999999999991px;height:12.899999999999977px;background:#d2691e;"></div>
<div class="r" style="left:108.31px;top:649.75px;width:12.899999999999991px;height:12.899999999999977px;background:#f4a460;"></div>
<div class="r" style="left:122.28px;top:649.75px;width:12.900000000000006px;height:12.899999999999977px;background:#cd853f;"></div>
<div class="r" style="left:136.25px;top:649.75px;width:12.900000000000006px;height:12.899999999999977px;background:#ff8c00;"></div>
<div class="r" style="left:150.22px;top:649.75px;width:12.900000000000006px;height:12.899999999999977px;background:#deb887;"></div>
<div class="r" style="left:164.19px;top:649.75px;width:12.900000000000006px;height:12.899999999999977px;background:#d2b48c;"></div>
<div class="r" style="left:178.16px;top:649.75px;width:12.900000000000006px;height:12.899999999999977px;background:#ffdead;"></div>
<div class="r" style="left:192.13px;top:649.75px;width:12.900000000000006px;height:12.899999999999977px;background:#ffdab9;"></div>
<div class="r" style="left:206.1px;top:649.75px;width:12.900000000000006px;height:12.899999999999977px;background:#ffe4c4;"></div>
<div class="r" style="left:220.07px;top:649.75px;width:12.900000000000006px;height:12.899999999999977px;background:#ffe4b5;"></div>
<div class="r" style="left:234.04px;top:649.75px;width:12.900000000000006px;height:12.899999999999977px;background:#f5deb3;"></div>
<div class="r" style="left:248.01px;top:649.75px;width:12.900000000000034px;height:12.899999999999977px;background:#ffa500;"></div>
<div class="r" style="left:261.98px;top:649.75px;width:12.899999999999977px;height:12.899999999999977px;background:#b8860b;"></div>
<div class="r" style="left:66.4px;top:663.8px;width:12.899999999999991px;height:12.900000000000091px;background:#daa520;"></div>
<div class="r" style="left:80.37px;top:663.8px;width:12.899999999999991px;height:12.900000000000091px;background:#eedd82;"></div>
<div class="r" style="left:94.34px;top:663.8px;width:12.899999999999991px;height:12.900000000000091px;background:#ffd700;"></div>
<div class="r" style="left:108.31px;top:663.8px;width:12.899999999999991px;height:12.900000000000091px;background:#ffeb8c;"></div>
<div class="r" style="left:122.28px;top:663.8px;width:12.900000000000006px;height:12.900000000000091px;background:#fafad2;"></div>
<div class="r" style="left:136.25px;top:663.8px;width:12.900000000000006px;height:12.900000000000091px;background:#f5f5dc;"></div>
<div class="r" style="left:150.22px;top:663.8px;width:12.900000000000006px;height:12.900000000000091px;background:#fff8dc;"></div>
<div class="r" style="left:164.19px;top:663.8px;width:12.900000000000006px;height:12.900000000000091px;background:#ffffe0;"></div>
<div class="r" style="left:178.16px;top:663.8px;width:12.900000000000006px;height:12.900000000000091px;background:#f0e68c;"></div>
<div class="r" style="left:192.13px;top:663.8px;width:12.900000000000006px;height:12.900000000000091px;background:#eee8aa;"></div>
<div class="r" style="left:206.1px;top:663.8px;width:12.900000000000006px;height:12.900000000000091px;background:#bdb76b;"></div>
<div class="r" style="left:220.07px;top:663.8px;width:12.900000000000006px;height:12.900000000000091px;background:#808000;"></div>
<div class="r" style="left:234.04px;top:663.8px;width:12.900000000000006px;height:12.900000000000091px;background:#6b8e23;"></div>
<div class="r" style="left:248.01px;top:663.8px;width:12.900000000000034px;height:12.900000000000091px;background:#9acd32;"></div>
<div class="r" style="left:261.98px;top:663.8px;width:12.899999999999977px;height:12.900000000000091px;background:#556b2f;"></div>
<div class="r" style="left:66.4px;top:677.85px;width:12.899999999999991px;height:12.899999999999977px;background:#9acd32;"></div>
<div class="r" style="left:80.37px;top:677.85px;width:12.899999999999991px;height:12.899999999999977px;background:#adff2f;"></div>
<div class="r" style="left:94.34px;top:677.85px;width:12.899999999999991px;height:12.899999999999977px;background:#7fff00;"></div>
<div class="r" style="left:108.31px;top:677.85px;width:12.899999999999991px;height:12.899999999999977px;background:#7cfc00;"></div>
<div class="r" style="left:122.28px;top:677.85px;width:12.900000000000006px;height:12.899999999999977px;background:#006400;"></div>
<div class="r" style="left:136.25px;top:677.85px;width:12.900000000000006px;height:12.899999999999977px;background:#228b22;"></div>
<div class="r" style="left:150.22px;top:677.85px;width:12.900000000000006px;height:12.899999999999977px;background:#32cd32;"></div>
<div class="r" style="left:164.19px;top:677.85px;width:12.900000000000006px;height:12.899999999999977px;background:#8fbc8f;"></div>
<div class="r" style="left:178.16px;top:677.85px;width:12.900000000000006px;height:12.899999999999977px;background:#90ee90;"></div>
<div class="r" style="left:192.13px;top:677.85px;width:12.900000000000006px;height:12.899999999999977px;background:#98fb98;"></div>
<div class="r" style="left:206.1px;top:677.85px;width:12.900000000000006px;height:12.899999999999977px;background:#2e8b57;"></div>
<div class="r" style="left:220.07px;top:677.85px;width:12.900000000000006px;height:12.899999999999977px;background:#3cb371;"></div>
<div class="r" style="left:234.04px;top:677.85px;width:12.900000000000006px;height:12.899999999999977px;background:#00ff7f;"></div>
<div class="r" style="left:248.01px;top:677.85px;width:12.900000000000034px;height:12.899999999999977px;background:#00fa9a;"></div>
<div class="r" style="left:261.98px;top:677.85px;width:12.899999999999977px;height:12.899999999999977px;background:#7fffd4;"></div>
<div class="r" style="left:66.4px;top:691.9px;width:12.899999999999991px;height:12.899999999999977px;background:#66cdaa;"></div>
<div class="r" style="left:80.37px;top:691.9px;width:12.899999999999991px;height:12.899999999999977px;background:#40e0d0;"></div>
<div class="r" style="left:94.34px;top:691.9px;width:12.899999999999991px;height:12.899999999999977px;background:#48d1cc;"></div>
<div class="r" style="left:108.31px;top:691.9px;width:12.899999999999991px;height:12.899999999999977px;background:#20b2aa;"></div>
<div class="r" style="left:122.28px;top:691.9px;width:12.900000000000006px;height:12.899999999999977px;background:#778899;"></div>
<div class="r" style="left:136.25px;top:691.9px;width:12.900000000000006px;height:12.899999999999977px;background:#708090;"></div>
<div class="r" style="left:150.22px;top:691.9px;width:12.900000000000006px;height:12.899999999999977px;background:#2f4f4f;"></div>
<div class="r" style="left:164.19px;top:691.9px;width:12.900000000000006px;height:12.899999999999977px;background:#008080;"></div>
<div class="r" style="left:178.16px;top:691.9px;width:12.900000000000006px;height:12.899999999999977px;background:#008b8b;"></div>
<div class="r" style="left:192.13px;top:691.9px;width:12.900000000000006px;height:12.899999999999977px;background:#e0ffff;"></div>
<div class="r" style="left:206.1px;top:691.9px;width:12.900000000000006px;height:12.899999999999977px;background:#f0ffff;"></div>
<div class="r" style="left:220.07px;top:691.9px;width:12.900000000000006px;height:12.899999999999977px;background:#f0fff0;"></div>
<div class="r" style="left:234.04px;top:691.9px;width:12.900000000000006px;height:12.899999999999977px;background:#ffffff;"></div>
<div class="r" style="left:248.01px;top:691.9px;width:12.900000000000034px;height:12.899999999999977px;background:#afeeee;"></div>
<div class="r" style="left:261.98px;top:691.9px;width:12.899999999999977px;height:12.899999999999977px;background:#00ced1;"></div>
<div class="r" style="left:443px;top:128px;width:283px;height:91px;background:transparent;border:4px solid #e41d1d;box-sizing:border-box;"></div>
<div class="r" style="left:460px;top:437px;width:261px;height:33px;background:transparent;border:4px solid #e41d1d;box-sizing:border-box;"></div>
<div class="r" style="left:229px;top:531.3px;width:50px;height:28.0px;background:transparent;border:4.5px solid #e41d1d;box-sizing:border-box;"></div>
<svg class="r" style="left:0px;top:0px;pointer-events:none;" width="727" height="696" viewBox="0 0 727 696"><line x1="461" y1="454" x2="298" y2="535.5" stroke="#e41d1d" stroke-width="4"/><polygon points="283,543.4 296.3,526.2 305.2,543.8" fill="#e41d1d"/></svg>
</body></html>
